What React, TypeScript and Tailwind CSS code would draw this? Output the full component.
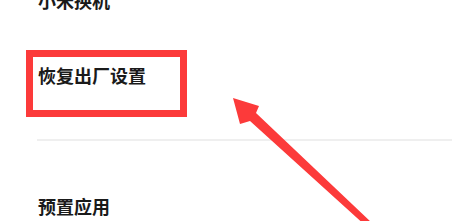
export default function App() {
  return (
    <div
      className="relative h-[221px] w-[452px] overflow-hidden bg-white"
      style={{ fontFamily: '"Noto Sans CJK SC", "Noto Sans", sans-serif' }}
    >
      <div className="flex flex-col">
        <div className="mt-[-9px] flex items-center justify-between pl-[38px] pr-0">
          <span className="text-[18px] leading-[18px] font-semibold text-[#1a1a1a]">小米换机</span>
          <span className="mr-[-6px] text-[14px] leading-[18px] text-[#e4e4e4]">›</span>
        </div>
        <div className="mt-[56.5px] flex items-center justify-between pl-[38px]">
          <span className="text-[18px] leading-[18px] font-semibold text-[#1a1a1a]">恢复出厂设置</span>
          <span className="mr-[-6px] text-[14px] leading-[18px] text-[#e4e4e4]">›</span>
        </div>
        <div className="mt-[55.5px] ml-[37px] h-[2px] bg-[#efefef]" />
        <div className="mt-[56px] flex items-center justify-between pl-[38px]">
          <span className="text-[18px] leading-[18px] font-semibold text-[#1a1a1a]">预置应用</span>
          <span className="mr-[-6px] text-[14px] leading-[18px] text-[#e4e4e4]">›</span>
        </div>
      </div>

      {/* annotation box */}
      <div className="absolute left-[26px] top-[50px] h-[67px] w-[161px] border-[7px] border-[#fc3a3a]" />

      {/* annotation arrow */}
      <svg className="absolute left-0 top-0" width="452" height="221" viewBox="0 0 452 221">
        <polygon
          points="233,98 259,106 256,113 372,223 367,227 250,121 240,124"
          fill="#fc3a3a"
        />
      </svg>
    </div>
  );
}
